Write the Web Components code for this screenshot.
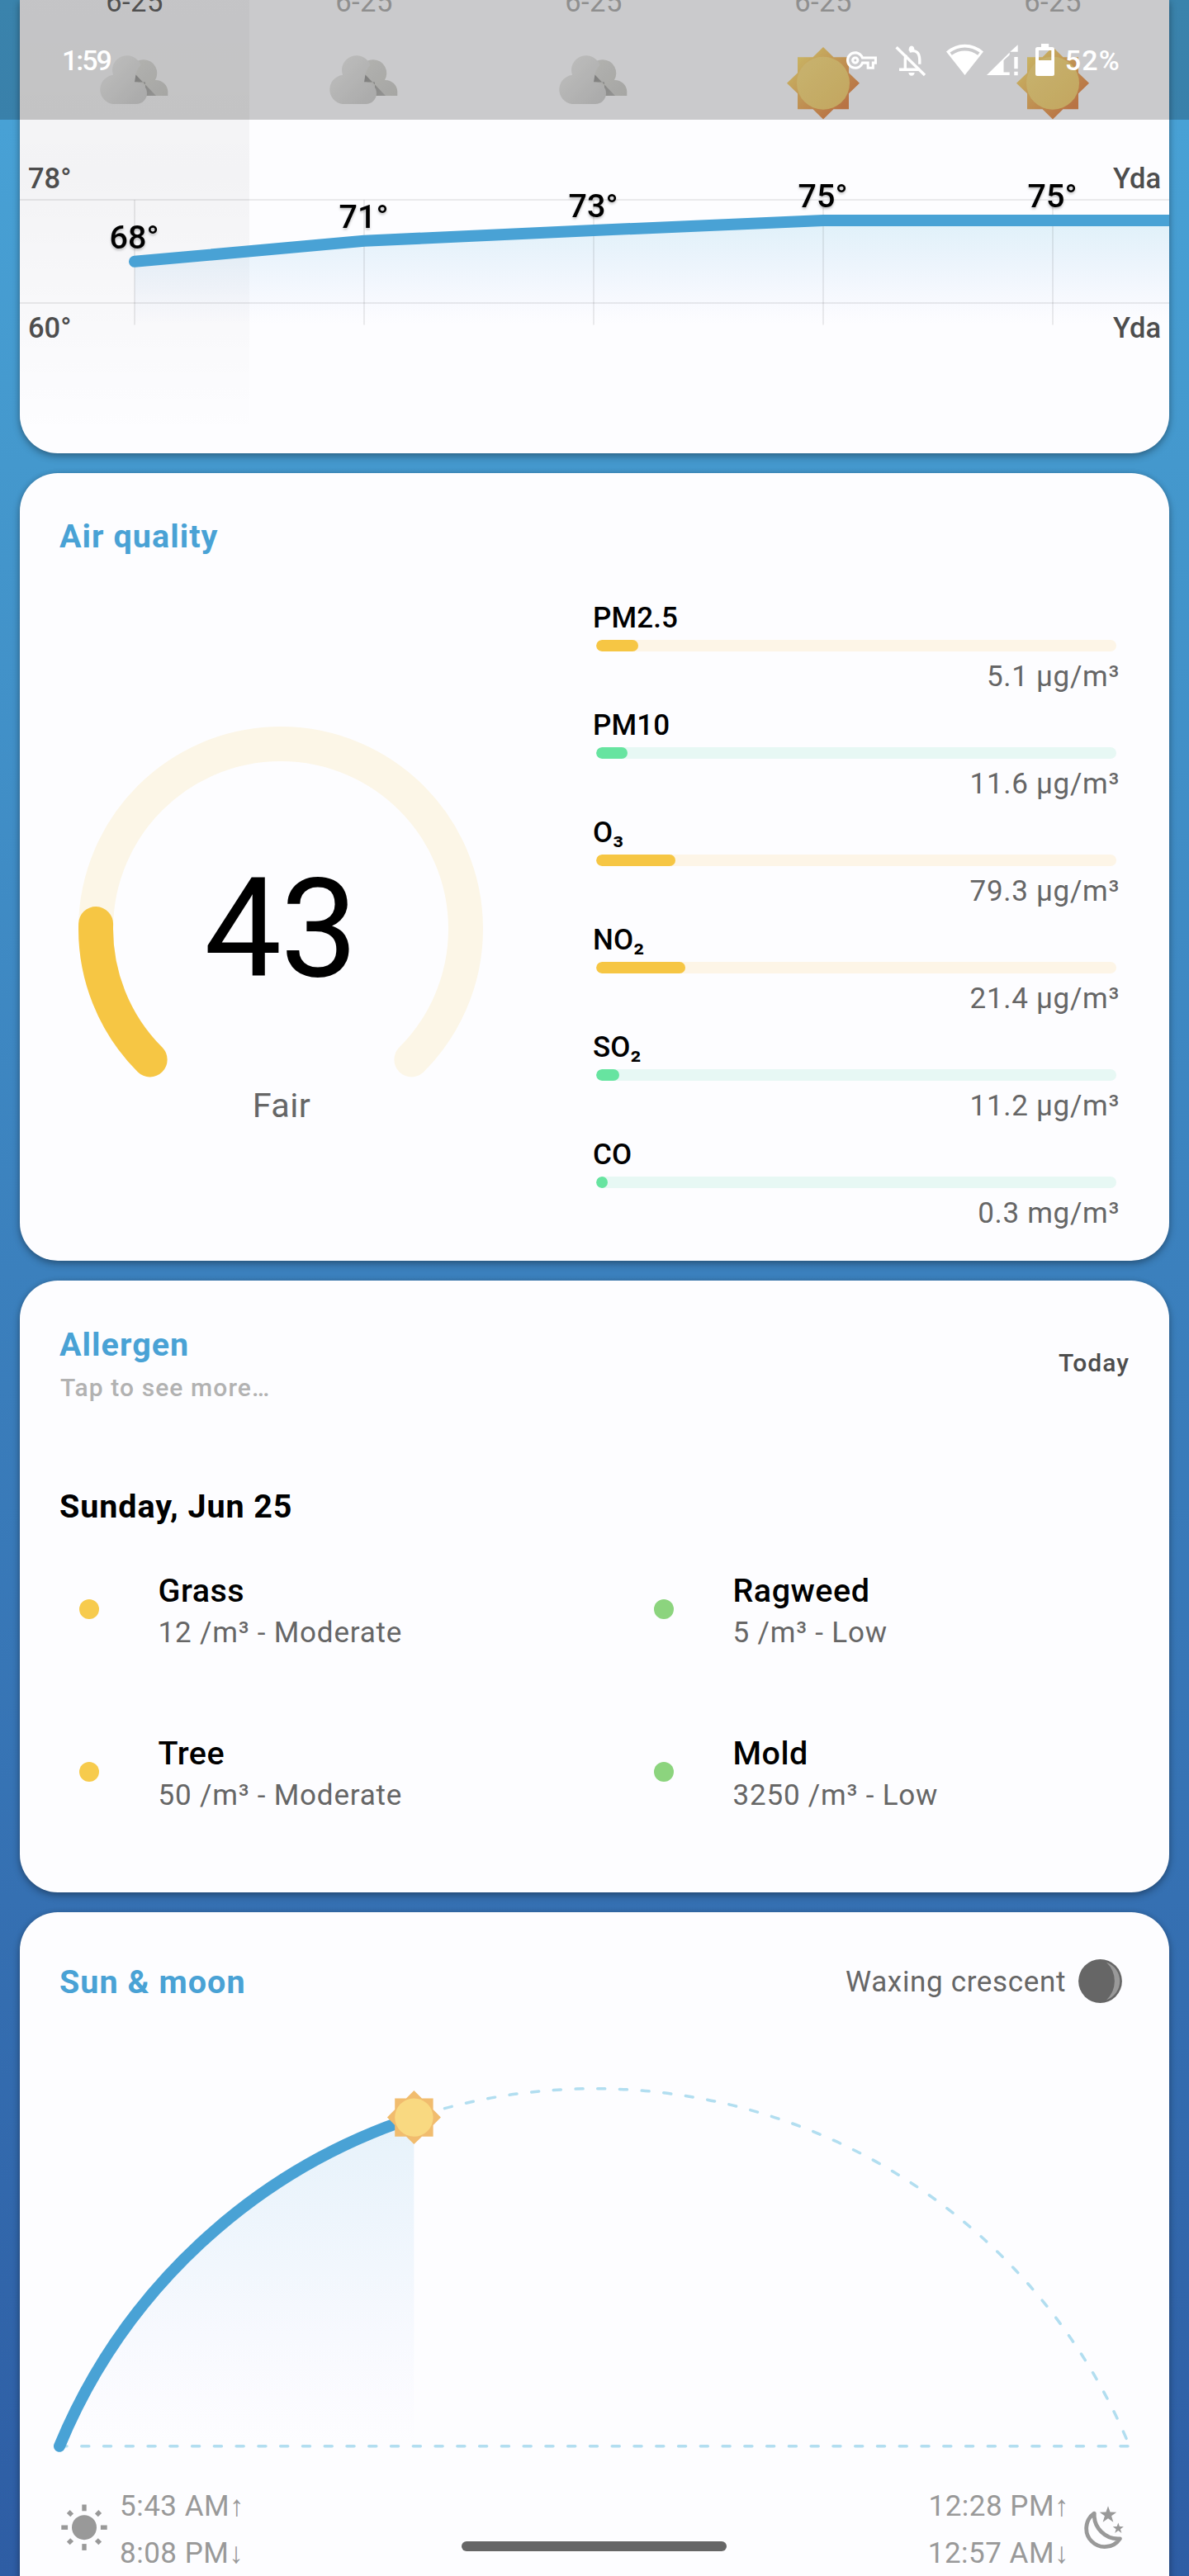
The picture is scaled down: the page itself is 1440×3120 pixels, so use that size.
<!DOCTYPE html>
<html lang="en">
<head>
<meta charset="utf-8">
<title>Weather</title>
<style>
html,body{margin:0;padding:0}
body{font-family:Roboto,"Noto Sans",sans-serif;width:1440px;height:3120px;overflow:hidden}
</style>
</head>
<body>
<weather-screen>
  <status-bar slot="status" time="1:59" battery="52%"></status-bar>
  <weather-card style="--h:549px;--radius:0 0 46px 46px"><hourly-chart></hourly-chart></weather-card>
  <weather-card style="--h:954px">
    <card-header heading="Air quality" style="--top:53px"></card-header>
    <air-quality></air-quality>
  </weather-card>
  <weather-card style="--h:741px">
    <card-header heading="Allergen" sub="Tap to see more…" style="--top:54px"><span class="today">Today</span></card-header>
    <allergen-day date="Sunday, Jun 25">
      <allergen-item name="Grass" amount="12 /m³ - Moderate" style="--dot:#f7cb4d"></allergen-item>
      <allergen-item name="Ragweed" amount="5 /m³ - Low" style="--dot:#8cd47e"></allergen-item>
      <allergen-item name="Tree" amount="50 /m³ - Moderate" style="--dot:#f7cb4d"></allergen-item>
      <allergen-item name="Mold" amount="3250 /m³ - Low" style="--dot:#8cd47e"></allergen-item>
    </allergen-day>
  </weather-card>
  <weather-card style="--h:900px;--radius:46px 46px 0 0">
    <card-header heading="Sun &amp; moon" style="--top:61px"><moon-phase>Waxing crescent</moon-phase></card-header>
    <sun-arc></sun-arc>
    <rise-set></rise-set>
  </weather-card>
</weather-screen>
<script>
const define = (name, render) => customElements.define(name, class extends HTMLElement {
  connectedCallback() {
    if (this.shadowRoot) return;
    this.attachShadow({ mode: 'open' }).innerHTML = render(this);
  }
});

const star = (cx, cy, r) => Array.from({ length: 10 }, (_, i) => {
  const a = -Math.PI / 2 + i * Math.PI / 5, q = i % 2 ? r * 0.4 : r;
  return (cx + q * Math.cos(a)).toFixed(2) + ',' + (cy + q * Math.sin(a)).toFixed(2);
}).join(' ');

define('weather-screen', () => `
<style>
:host{display:flex;flex-direction:column;gap:24px;position:relative;box-sizing:border-box;width:1440px;height:3120px;overflow:hidden;padding:0 24px;
background:linear-gradient(#49a4d7 0,#48a1d5 150px,#4498cd 560px,#3b80bd 1540px,#3570b2 2300px,#2e5da4 3120px)}
.over{position:absolute;left:0;top:0;width:100%}
.home{position:absolute;left:559px;top:3078px;width:321px;height:12px;border-radius:6px;background:#666;box-shadow:0 0 0 1px rgba(255,255,255,.5)}
</style>
<slot></slot><div class="over"><slot name="status"></slot></div><div class="home"></div>`);

define('status-bar', el => `
<style>
:host{display:flex;justify-content:space-between;box-sizing:border-box;height:145px;padding:52px 83px 0 75px;background:rgba(0,0,0,.2);color:#fff;font:500 34px/42px Roboto,sans-serif}
.r{display:flex;letter-spacing:1.200px}
svg{display:block;width:256px;height:42px;margin-right:10px}
.t{letter-spacing:-2px}
</style>
<span class="t">${el.getAttribute('time')}</span>
<span class="r"><svg viewBox="1023 52 256 42" fill="#fff">
<g transform="translate(1024 54.6) scale(1.54)"><path d="M22 19h-6v-4h-2.68c-1.14 2.42-3.6 4-6.32 4-3.86 0-7-3.14-7-7s3.14-7 7-7c2.72 0 5.17 1.58 6.32 4H24v6h-2v4zm-4-2h2v-4h2v-2H11.94l-.23-.67C11.01 8.34 9.11 7 7 7c-2.76 0-5 2.24-5 5s2.24 5 5 5c2.11 0 4.01-1.34 4.71-3.33l.23-.67H18v4zM7 15c-1.65 0-3-1.35-3-3s1.35-3 3-3 3 1.35 3 3-1.35 3-3 3zm0-4c-.55 0-1 .45-1 1s.45 1 1 1 1-.45 1-1-.45-1-1-1z"/></g>
<g fill="none" stroke="#fff" stroke-width="3.4"><path d="M1084.6 57.2L1119 91"/><path d="M1088 84.2h25M1095.3 84V72q0-3 1.2-5.500M1100.500 62.200q12-3 12.300 10.500v5"/></g>
<path d="M1099.500 61.500q0-6 3.500-6t3.500 6zM1099.300 88h7.400q-.5 3.700-3.700 3.700t-3.700-3.700z"/>
<path fill-rule="evenodd" d="M1145 62.500Q1155 53.800 1167.500 53.800T1190 62.500L1167.500 91ZM1149.500 63.600L1151.800 66.700Q1159 61.500 1167.500 61.500T1183.200 66.700L1185.500 63.600Q1177 57.600 1167.500 57.600T1149.500 63.600Z"/>
<path d="M1194 91L1221.700 63.600V66.500L1214.500 73.200V87.500H1221.700V91ZM1222.300 62.800L1231.700 54.300V62.800ZM1227.300 69h4.400v14.200h-4.400zM1227.300 86.800h4.400v4.400h-4.400z"/>
<path fill-rule="evenodd" d="M1260 53h9.200v4h4.300q2.500 0 2.500 2.500v30q0 2.500-2.500 2.500h-18q-2.500 0-2.500-2.500v-30q0-2.500 2.500-2.500h4.500zM1257 61v12h15.300v-12z"/>
</svg><span>${el.getAttribute('battery')}</span></span>`);

define('weather-card', () => `
<style>
:host{display:flex;flex-direction:column;flex:none;box-sizing:border-box;height:var(--h);border-radius:var(--radius,46px);background:#fdfdff;box-shadow:0 4px 10px rgba(0,0,0,.3),0 0 6px rgba(0,0,0,.12)}
::slotted(*){flex:none}
</style><slot></slot>`);

define('card-header', el => `
<style>
:host{display:flex;justify-content:space-between;align-items:center;margin:var(--top) 48px 0}
h2{margin:0;font:700 39.500px/48px Roboto,sans-serif;letter-spacing:1.050px;color:#49a2d5}
p{margin:10px 0 0 1px;font:500 30px/36px Roboto,sans-serif;letter-spacing:1.100px;color:#b2b2b2}
::slotted(.today){font:500 30px/36px Roboto,sans-serif;letter-spacing:1.050px;color:#4d4d4d;margin-bottom:3px}
</style>
<div><h2>${el.getAttribute('heading')}</h2>${el.hasAttribute('sub') ? `<p>${el.getAttribute('sub')}</p>` : ''}</div><slot></slot>`);

define('hourly-chart', () => {
  const xs = [163, 441, 719, 997, 1275], ys = [316.8, 291.8, 279, 267, 267], ts = ['68°', '71°', '73°', '75°', '75°'];
  const pts = xs.map((x, i) => x + ',' + ys[i]).join(' ');
  const cloud = x => `<g transform="translate(${x} 0)">
<path fill="url(#cb)" d="M-4 116V96A16.500 16.500 0 1 1 25 97A14.500 14.500 0 0 1 40.300 111V116Z"/>
<path fill="url(#cs)" d="M0 89L26 116H13V99.500H0Z"/>
<path fill="url(#cf)" d="M-26 90.800A17.700 17.700 0 1 1 7.500 79Q2.500 84 1.200 92L0 99.500H1A13.500 13.500 0 0 1 15 113A13 13 0 0 1 2 126H-22A17.600 17.600 0 1 1 -26 90.800Z"/></g>`;
  const sun = x => `<g transform="translate(${x} 100.700)"><path fill="url(#sq)" d="M0-43.800L12.500-31.500H31V-12.500L44 0L31 12.500V31.500H12.500L0 43.800L-12.500 31.500H-31V12.500L-44 0L-31-12.500V-31.500H-12.500Z"/><circle r="32" fill="url(#sc)"/></g>`;
  return `
<style>:host{display:block;height:549px}svg{display:block}text{font-family:Roboto,sans-serif}
.t{font-size:39.500px;font-weight:500;text-anchor:middle;filter:drop-shadow(0 2px 1.500px rgba(0,0,0,.25))}
.d{font-size:34.500px;text-anchor:middle;fill:#b3b3b3;letter-spacing:.5px}.k{font-size:34.500px;font-weight:500;fill:#4d4d4d}</style>
<svg width="1392" height="549" viewBox="24 0 1392 549">
<defs>
<linearGradient id="sh" x2="0" y2="1"><stop offset="0" stop-opacity=".026"/><stop offset=".4" stop-opacity=".04"/><stop offset="1" stop-opacity="0"/></linearGradient>
<linearGradient id="ar" gradientUnits="userSpaceOnUse" x1="0" y1="267" x2="0" y2="393"><stop offset="0" stop-color="#40b0d9" stop-opacity=".16"/><stop offset=".5" stop-color="#4a9ee0" stop-opacity=".08"/><stop offset="1" stop-color="#6a8ff0" stop-opacity="0"/></linearGradient>
<linearGradient id="cb" x2="1" y2="1"><stop offset="0" stop-color="#dfdfdc"/><stop offset="1" stop-color="#d0d0cd"/></linearGradient>
<linearGradient id="cs" x2="1" y2="1"><stop offset="0" stop-color="#9c9c9b"/><stop offset="1" stop-color="#b9b9b7"/></linearGradient>
<linearGradient id="cf" x2="1" y2="1"><stop offset="0" stop-color="#f0f0ef"/><stop offset="1" stop-color="#d3d3d3"/></linearGradient>
<linearGradient id="sq" x2="1" y2="1"><stop offset=".15" stop-color="#fbe07c"/><stop offset=".8" stop-color="#e79056"/></linearGradient>
<linearGradient id="sc" x2="1" y2="1"><stop offset="0" stop-color="#fae08b"/><stop offset="1" stop-color="#f4d077"/></linearGradient>
</defs>
<rect x="24" width="278" height="530" fill="url(#sh)"/>
<polygon points="163,393 ${pts} 1416,267 1416,393" fill="url(#ar)"/>
<g stroke="#000" stroke-opacity=".075" stroke-width="2"><path d="M24 242H1416M24 367H1416"/>${xs.map(x => `<path d="M${x} 242V393.500"/>`).join('')}</g>
<polyline points="${pts} 1440,267" fill="none" stroke="#49a2d5" stroke-width="14" stroke-linecap="round" stroke-linejoin="round"/>
${xs.map((x, i) => `<text class="d" x="${x}" y="13.600"${i ? '' : ' style="fill:#646464"'}>6-25</text><text class="t" x="${x - 0.5}" y="${ys[i] - 16.200}">${ts[i]}</text>`).join('')}
<text class="k" x="34" y="227.500">78°</text><text class="k" x="34" y="408.500">60°</text>
<text class="k" x="1406" y="227.500" text-anchor="end">Yda</text><text class="k" x="1406" y="408.500" text-anchor="end">Yda</text>
${cloud(163)}${cloud(441)}${cloud(719)}${sun(997)}${sun(1275)}
</svg>`;
});

define('pollutant-row', el => `
<style>
:host{display:block;height:130px}
.n{font:500 35px/44px Roboto,"DejaVu Sans",sans-serif;height:44px;letter-spacing:.1px;color:#000}
.b{height:14px;margin:4px 4px 8.500px;border-radius:7px;background:var(--track);overflow:hidden}
.b i{display:block;height:14px;border-radius:7px;background:var(--fill);width:${el.getAttribute('fill')}px}
.v{font:400 35px/44px Roboto,sans-serif;height:44px;text-align:right;letter-spacing:.700px;color:#666}
</style>
<div class="n">${el.getAttribute('name')}</div><div class="b"><i></i></div><div class="v">${el.getAttribute('value')}</div>`);

define('air-quality', () => {
  const rows = [['PM2.5', '5.1 µg/m³', 50.500, 1], ['PM10', '11.6 µg/m³', 38, 0], ['O₃', '79.3 µg/m³', 96, 1], ['NO₂', '21.4 µg/m³', 108, 1], ['SO₂', '11.2 µg/m³', 27.500, 0], ['CO', '0.3 mg/m³', 14, 0]];
  const p = (deg) => { const a = deg * Math.PI / 180; return (340 + 224 * Math.cos(a)).toFixed(1) + ' ' + (1125 + 224 * Math.sin(a)).toFixed(1); };
  return `
<style>:host{display:flex;padding:0 60px 0 48px;height:853px;justify-content:space-between}
svg{display:block}text{font-family:Roboto,sans-serif;text-anchor:middle}
.list{width:638px;padding-top:53px}</style>
<svg width="600" height="853" viewBox="72 674 600 853"><g fill="none" stroke-width="42" stroke-linecap="round">
<path stroke="#fcf6e7" d="M${p(135)}A224 224 0 1 1 ${p(45)}"/>
<path stroke="#f6c644" d="M${p(135)}A224 224 0 0 1 ${p(181.500)}"/></g>
<text x="339.500" y="1182" font-size="167" letter-spacing="-1.500">43</text>
<text x="341" y="1353" font-size="41.500" fill="#666" letter-spacing=".4">Fair</text></svg>
<div class="list">${rows.map(([n, v, f, y]) => `<pollutant-row name="${n}" value="${v}" fill="${f}" style="--fill:${y ? '#f6c644' : '#67e4a0'};--track:${y ? '#fdf5e7' : '#e7f8f4'}"></pollutant-row>`).join('')}</div>`;
});

define('allergen-day', el => `
<style>:host{display:block}
h3{margin:102px 48px 54px;font:700 39.500px/48px Roboto,sans-serif;letter-spacing:.9px;color:#000}
div{display:grid;grid-template-columns:1fr 1fr;grid-auto-rows:197px}</style>
<h3>${el.getAttribute('date')}</h3><div><slot></slot></div>`);

define('allergen-item', el => `
<style>:host{display:flex;align-items:flex-start}
i{flex:none;width:24px;height:24px;border-radius:50%;background:var(--dot);margin:33.500px 72px 0 71.500px}
b{display:block;font:500 39.500px/48px Roboto,sans-serif;color:#000;letter-spacing:.5px;margin-bottom:4.500px}
span{display:block;font:400 35px/44px Roboto,sans-serif;color:#666;letter-spacing:.800px}</style>
<i></i><div><b>${el.getAttribute('name')}</b><span>${el.getAttribute('amount')}</span></div>`);

define('moon-phase', () => `
<style>:host{display:flex;align-items:center;gap:15px;font:400 35px/48px Roboto,sans-serif;color:#666;letter-spacing:.650px;margin:-3px 9px -3px 0}
svg{display:block;margin-top:-3px}</style>
<slot></slot><svg width="53" height="53" viewBox="-26.500 -26.500 53 53"><circle r="26.400" fill="#666"/><path fill="#999" d="M7.500-22.700A24 24 0 0 1 7.500 22.700A31 31 0 0 0 7.500-22.700Z"/></svg>`);

define('sun-arc', () => `
<style>:host{display:block}svg{display:block}</style>
<svg width="1392" height="575" viewBox="24 2425 1392 575">
<defs><linearGradient id="g" gradientUnits="userSpaceOnUse" x1="0" y1="2530" x2="0" y2="2962"><stop offset="0" stop-color="#49a9d9" stop-opacity=".14"/><stop offset=".5" stop-color="#4a9ee0" stop-opacity=".065"/><stop offset="1" stop-color="#9a8ff0" stop-opacity="0"/></linearGradient>
<clipPath id="c"><rect x="518" y="2500" width="900" height="480"/></clipPath></defs>
<path fill="url(#g)" d="M72 2962.700A701.400 701.400 0 0 1 501.400 2564.500V2962.700Z"/>
<g fill="none" stroke="#b2def0" stroke-width="3.500" stroke-linecap="round" stroke-dasharray="9 17.770"><path clip-path="url(#c)" d="M72 2962.700A701.400 701.400 0 0 1 1368 2962.700"/><path d="M72 2962.700H1368"/></g>
<path fill="none" stroke="#49a2d5" stroke-width="14" stroke-linecap="round" d="M72 2962.700A701.400 701.400 0 0 1 501.400 2564.500"/>
<g transform="translate(501.400 2564.600)"><path fill="#f1bc6e" d="M0-32.500L9.500-23.200H23.200V-9.500L32.500 0L23.200 9.500V23.200H9.500L0 32.500L-9.500 23.200H-23.200V9.500L-32.500 0L-23.200-9.500V-23.200H-9.500Z"/><circle r="23.200" fill="#f9d981"/></g>
</svg>`);

define('rise-set', () => `
<style>:host{display:flex;justify-content:space-between;padding:6.500px 54px 0 50px;font:400 35px/57.500px Roboto,sans-serif;letter-spacing:.500px;color:#999}
.g{display:flex;gap:15px}.g svg{display:block;flex:none}.r{text-align:right}
.l{height:57.500px;white-space:nowrap}</style>
<div class="g"><svg width="56" height="115" viewBox="74 3006.500 56 115" fill="#999"><circle cx="102" cy="3060.700" r="15"/>
${[0, 90, 180, 270].map(a => `<rect x="99.300" y="3033" width="5.400" height="7.800" transform="rotate(${a} 102 3060.700)"/>`).join('')}
${[45, 135, 225, 315].map(a => `<rect x="99.300" y="3033.500" width="5.400" height="6.200" transform="rotate(${a} 102 3060.700)"/>`).join('')}</svg>
<div><div class="l">5:43 AM↑</div><div class="l">8:08 PM↓</div></div></div>
<div class="g" style="gap:17px"><div class="r"><div class="l">12:28 PM↑</div><div class="l">12:57 AM↓</div></div>
<svg width="50" height="115" viewBox="1312 3006.500 50 115" fill="#999"><path fill="none" stroke="#999" stroke-width="4.800" stroke-linejoin="round" d="M1325.300 3043.600A22.200 22.200 0 1 0 1356.300 3074.300A29 29 0 0 1 1325.300 3043.600Z"/><polygon points="${star(1342, 3045.500, 10.800)}"/><polygon points="${star(1354.300, 3061.800, 6.900)}"/></svg></div>`);
</script>
</body>
</html>
